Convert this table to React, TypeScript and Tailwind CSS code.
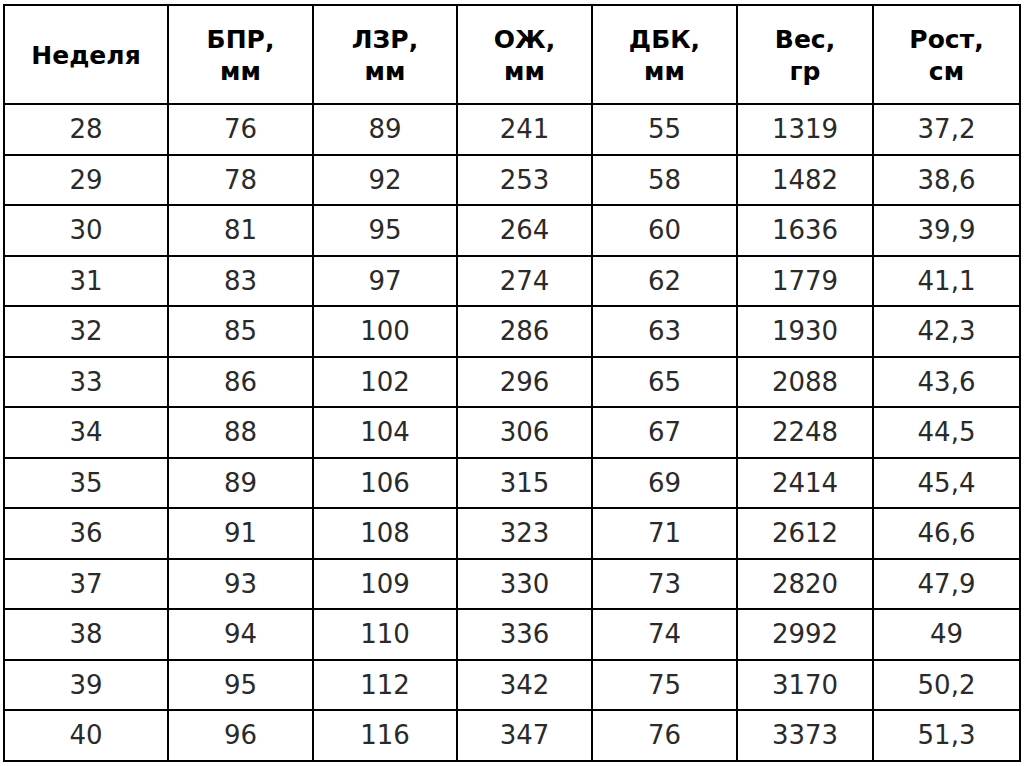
const headers: string[][] = [
  ['Неделя'],
  ['БПР,', 'мм'],
  ['ЛЗР,', 'мм'],
  ['ОЖ,', 'мм'],
  ['ДБК,', 'мм'],
  ['Вес,', 'гр'],
  ['Рост,', 'см'],
]

const rows: string[][] = [
  ['28', '76', '89', '241', '55', '1319', '37,2'],
  ['29', '78', '92', '253', '58', '1482', '38,6'],
  ['30', '81', '95', '264', '60', '1636', '39,9'],
  ['31', '83', '97', '274', '62', '1779', '41,1'],
  ['32', '85', '100', '286', '63', '1930', '42,3'],
  ['33', '86', '102', '296', '65', '2088', '43,6'],
  ['34', '88', '104', '306', '67', '2248', '44,5'],
  ['35', '89', '106', '315', '69', '2414', '45,4'],
  ['36', '91', '108', '323', '71', '2612', '46,6'],
  ['37', '93', '109', '330', '73', '2820', '47,9'],
  ['38', '94', '110', '336', '74', '2992', '49'],
  ['39', '95', '112', '342', '75', '3170', '50,2'],
  ['40', '96', '116', '347', '76', '3373', '51,3'],
]

const widths = [
  'w-[164px]',
  'w-[145px]',
  'w-[144px]',
  'w-[135px]',
  'w-[145px]',
  'w-[136px]',
  'w-[147px]',
]

export default function App() {
  return (
    <div
      className="w-[1024px] h-[766px] bg-white pt-[4px] pl-[3px]"
      style={{ fontFamily: '"DejaVu Sans", Verdana, sans-serif' }}
    >
      <table className="table-fixed border-collapse w-[1018px] border-2 border-black">
        <colgroup>
          {widths.map((w, i) => (
            <col key={i} className={w} />
          ))}
        </colgroup>
        <thead>
          <tr className="h-[99px]">
            {headers.map((h, i) => (
              <th
                key={i}
                className="border-2 border-black text-center align-middle font-bold text-[25px] leading-[32px] text-black p-0 pt-[3px]"
              >
                {h.map((line) => (
                  <div key={line}>{line}</div>
                ))}
              </th>
            ))}
          </tr>
        </thead>
        <tbody>
          {rows.map((r) => (
            <tr key={r[0]} className="h-[50.5px]">
              {r.map((cell, i) => (
                <td
                  key={i}
                  className="border-2 border-black text-center align-middle text-[26px] leading-none text-[#2a2a2a] p-0"
                >
                  {cell}
                </td>
              ))}
            </tr>
          ))}
        </tbody>
      </table>
    </div>
  )
}
